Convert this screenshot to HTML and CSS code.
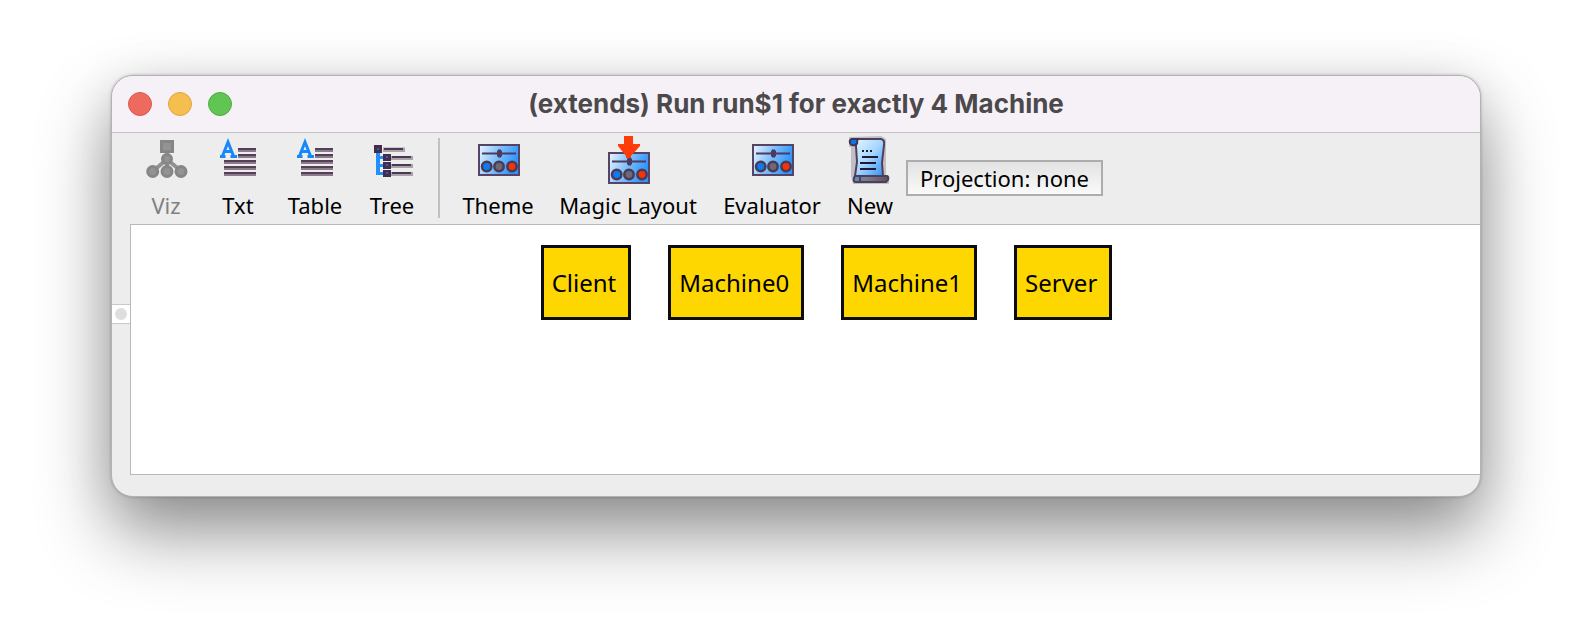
FILE: index.html
```
<!DOCTYPE html>
<html lang="en">
<head>
<meta charset="utf-8">
<title>(extends) Run run$1 for exactly 4 Machine</title>
<link rel="stylesheet" href="styles.css">
</head>
<body>
<svg class="defs" aria-hidden="true">
  <defs>
    <linearGradient id="panel" x1="0" y1="0" x2="1" y2="0.3">
      <stop offset="0" stop-color="#eaf6ff"/><stop offset="0.5" stop-color="#84c0fb"/><stop offset="1" stop-color="#2f95fb"/>
    </linearGradient>
    <linearGradient id="paper" x1="0" y1="0" x2="1" y2="1">
      <stop offset="0" stop-color="#e4f5ff"/><stop offset="0.5" stop-color="#a4d6ff"/><stop offset="1" stop-color="#2f8ff5"/>
    </linearGradient>
    <linearGradient id="roll" x1="0" y1="0" x2="1" y2="0">
      <stop offset="0" stop-color="#5f8fd0"/><stop offset="0.4" stop-color="#7a7a8c"/><stop offset="1" stop-color="#5a5060"/>
    </linearGradient>
    <symbol id="text-lines" viewBox="0 0 48 48">
      <path fill="#533f58" d="M24 12h18v2H24zM24 18h18v2H24zM10 24h32v2H10zM10 30h32v2H10zM10 36h32v2H10z"/>
      <path fill="#8d7a8b" d="M24 14h18v2H24zM24 20h18v2H24zM10 26h32v2H10zM10 32h32v2H10zM10 38h32v2H10z"/>
      <path fill="none" stroke="#1688fb" stroke-width="3" d="M8.500 20L14 6L19.500 20M10.500 15.500H18M6 20.500H11.500M16.500 20.500H23"/>
    </symbol>
    <symbol id="controls" viewBox="0 0 48 32">
      <rect x="5" y="1" width="40" height="30" fill="url(#panel)" stroke="#554466" stroke-width="2"/>
      <path fill="#4b3b5c" d="M8 8.500h34v2H8zM23 6.500h1v-1h3v1h1v6h-1v1h-3v-1h-1z"/>
      <g stroke="#4a3a52" stroke-width="2.500">
        <circle cx="12.700" cy="22.500" r="4.700" fill="#0b7cf5"/>
        <circle cx="25" cy="22.500" r="4.700" fill="#6c6878"/>
        <circle cx="38" cy="22.500" r="4.700" fill="#f4330b"/>
      </g>
    </symbol>
  </defs>
</svg>
<main class="window">
  <header class="titlebar">
    <div class="lights">
      <button class="light close" aria-label="Close"></button>
      <button class="light minimize" aria-label="Minimize"></button>
      <button class="light zoom" aria-label="Zoom"></button>
    </div>
    <h1 class="title">(extends) Run run$1 for exactly 4 Machine</h1>
  </header>
  <nav class="toolbar">
    <button class="tool" disabled>
      <svg class="icon" viewBox="0 0 48 48">
        <path fill="none" stroke="#929292" stroke-width="4" d="M25 14V34M23 25L11 35M27 25L39 35"/>
        <g fill="#939393" stroke="#868686" stroke-width="3">
          <rect x="19.500" y="5.500" width="11" height="10"/>
          <circle cx="25" cy="23" r="4.500"/>
          <circle cx="10.700" cy="35.500" r="5"/><circle cx="25" cy="35.500" r="5"/><circle cx="39" cy="35.500" r="5"/>
        </g>
      </svg>Viz</button>
    <button class="tool"><svg class="icon"><use href="#text-lines"/></svg>Txt</button>
    <button class="tool"><svg class="icon"><use href="#text-lines"/></svg>Table</button>
    <button class="tool">
      <svg class="icon" viewBox="0 0 48 48">
        <path fill="#aaa4aa" d="M15 11.500h22v4.500H15zM23 20h22v4H23zM23 28h22v4H23zM23 36h22v4H23z"/>
        <path fill="#4b3653" d="M16 12h19v2H16zM24 20h19v2H24zM24 28h19v2H24zM24 36h19v2H24z"/>
        <path fill="none" stroke="#2190fa" stroke-width="4" d="M10 16V39"/>
        <path fill="none" stroke="#2190fa" stroke-width="3" d="M10 21.500H16M10 29.500H16M10 37.500H16"/>
        <path fill="#432c4c" d="M6 9h8v8H6zM15 18h8v7H15zM15 26h8v7H15zM15 34h8v7H15z"/>
        <path fill="#2863bb" d="M9 12h2v2H9zM18 20h2v2H18zM18 28h2v2H18zM18 36h2v2H18z"/>
      </svg>Tree</button>
    <span class="separator"></span>
    <button class="tool"><svg class="icon" viewBox="0 0 48 48"><use href="#controls" y="8" width="48" height="32"/></svg>Theme</button>
    <button class="tool">
      <svg class="icon" viewBox="0 0 48 48"><use href="#controls" y="16" width="48" height="32"/>
        <path fill="#ff3b0a" d="M20 0h9v8h7v2l-9 10v2h-5v-2L14 10V8h6z"/>
      </svg>Magic Layout</button>
    <button class="tool"><svg class="icon" viewBox="0 0 48 48"><use href="#controls" y="8" width="48" height="32"/></svg>Evaluator</button>
    <button class="tool">
      <svg class="icon" viewBox="0 0 48 48">
        <path fill="#c2bfc4" d="M3 1L35 0L40 3V40H43V48H7L5 40V11H3z"/>
        <path fill="url(#paper)" stroke="#503e5b" stroke-width="2" d="M10 3H35Q39 4 38 9L36 27L37 40H9L11 26L10 10z"/>
        <path fill="#0878e8" stroke="#443456" stroke-width="2" d="M12 3H6Q3 4 4 7T9 9Q12 8 11 5z"/>
        <path fill="url(#roll)" stroke="#4c4052" stroke-width="2" d="M9 40H41Q43 41 42 44L40 46H9Q7 45 8 42z"/>
        <path fill="#503e5b" d="M13 41h2v5h-2z"/>
        <path stroke="#251832" stroke-width="2" d="M16 15h2M20 15h2M24 15h2M16 21h16M14 27h16M14 33h16"/>
      </svg>New</button>
    <button class="projection">Projection: none</button>
  </nav>
  <div class="workspace">
    <div class="splitter"><span class="grip"></span></div>
    <section class="canvas">
      <div class="node">Client</div>
      <div class="node">Machine0</div>
      <div class="node">Machine1</div>
      <div class="node">Server</div>
    </section>
  </div>
</main>
</body>
</html>
```
FILE: styles.css
```
* { box-sizing: border-box; }

body {
  margin: 0;
  padding: 75px 111px 147px;
  overflow-x: hidden;
  background: #fff;
  color: #000;
  font-family: "Noto Sans", sans-serif;
  font-size: 22px;
}

.defs { position: absolute; width: 0; height: 0; }

.window {
  overflow: hidden;
  border: 1px solid #b3b3b3;
  border-radius: 22px;
  background: #ededed;
  box-shadow: 0 0 3px rgba(0, 0, 0, 0.25), 0 36px 72px rgba(0, 0, 0, 0.42), 0 8px 50px rgba(0, 0, 0, 0.1);
}

.titlebar {
  display: grid;
  grid-template-columns: 120px 1fr 120px;
  align-items: center;
  height: 57px;
  border-bottom: 1px solid #c6c3c6;
  background: #f6f1f6;
}

.lights { display: flex; gap: 16px; padding-left: 16px; }

.light {
  width: 24px;
  height: 24px;
  flex: none;
  padding: 0;
  border: 1px solid;
  border-radius: 50%;
}
.close { background: #ed6a5e; border-color: #d8584e; }
.minimize { background: #f5bf4f; border-color: #dca53f; }
.zoom { background: #61c554; border-color: #50ab43; }

.title {
  margin: 0;
  color: #4b494b;
  font: bold 26px/32px Inter, sans-serif;
  text-align: center;
  white-space: nowrap;
}

.toolbar {
  display: grid;
  grid-template-columns: 72px 72px 82px 72px 22px 96px 164px 124px 72px max-content;
  align-items: center;
  height: 91px;
  padding: 0 0 2px 18px;
}

.tool {
  display: flex;
  flex-direction: column;
  align-items: center;
  gap: 6px;
  padding: 0;
  border: 0;
  background: none;
  color: #000;
  font: inherit;
  line-height: 30px;
  white-space: nowrap;
}
.tool:disabled { color: #808080; }

.icon { width: 48px; height: 48px; flex: none; }

.separator {
  width: 2px;
  height: 80px;
  justify-self: center;
  background: #c0c0c0;
}

.projection {
  height: 36px;
  padding: 0 12px;
  border: 2px solid #adadad;
  background: linear-gradient(#e2e2e2, #fafafa);
  color: #000;
  font: inherit;
  line-height: 30px;
  white-space: nowrap;
}

.workspace { display: flex; padding-bottom: 21px; }

.splitter { width: 18px; flex: none; padding-top: 80px; }

.grip {
  display: flex;
  align-items: center;
  justify-content: center;
  height: 20px;
  border: solid #c9c9c9;
  border-width: 1px 0;
  background: #fff;
}
.grip::before {
  content: "";
  width: 12px;
  height: 12px;
  border-radius: 50%;
  background: #dedede;
}

.canvas {
  display: flex;
  flex: 1;
  align-items: flex-start;
  justify-content: center;
  gap: 37px;
  min-height: 251px;
  padding: 20px 0 20px 42px;
  border: 1px solid #b8b8b8;
  border-right: 0;
  background: #fff;
}

.node {
  padding: 19px 12px 18px 8px;
  border: 3px solid #0c0c0c;
  background: #ffd700;
  font-size: 24px;
  line-height: 32px;
}
```
